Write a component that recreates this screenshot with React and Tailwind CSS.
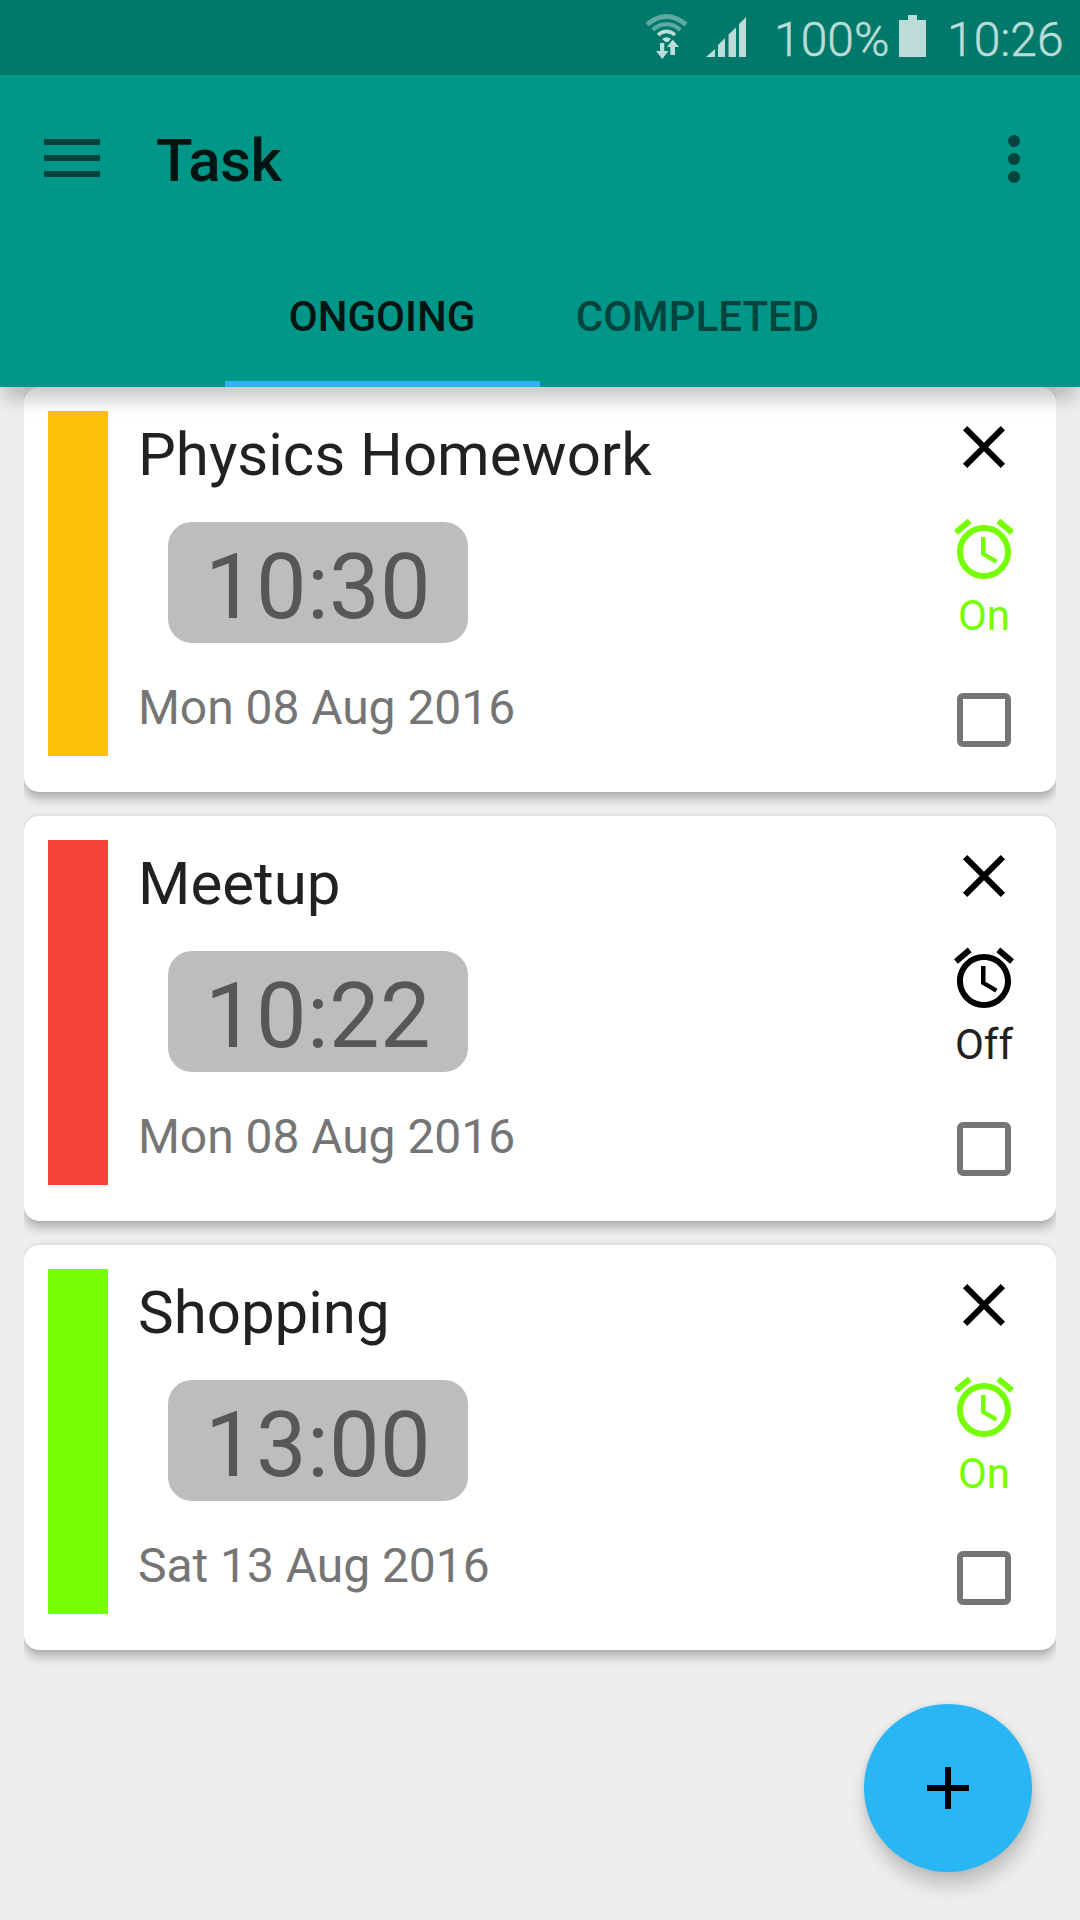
const TASKS = [
  { title: 'Physics Homework', time: '10:30', date: 'Mon 08 Aug 2016', bar: 'bg-[#ffc107]', on: true },
  { title: 'Meetup', time: '10:22', date: 'Mon 08 Aug 2016', bar: 'bg-[#f44336]', on: false },
  { title: 'Shopping', time: '13:00', date: 'Sat 13 Aug 2016', bar: 'bg-[#76ff03]', on: true },
];

function WifiIcon() {
  return (
    <svg className="ml-[645px] h-[60px] w-[44px]" viewBox="645 0 44 60" fill="none">
      <g stroke="#bbdcd7">
        <path d="M647 24.6 Q666.5 8.4 686 24.6" strokeWidth="4.6" opacity="0.5" />
        <path d="M652.7 29.8 Q666.5 18.6 680.3 29.8" strokeWidth="4.2" opacity="0.5" />
        <path d="M658 35 Q666.5 27.8 675 35" strokeWidth="3.6" />
      </g>
      <path d="M662 39 Q666.500 35.500 671 39 L668 42 H665.500 Z" fill="#bbdcd7" />
      <path
        d="M660 43 H664.300 V51 H668.500 L662.300 59 L656 51 H660 Z M670.300 55 V47 H666.800 L672.700 39.700 L679 47 H675 V55 Z"
        fill="#bbdcd7"
      />
    </svg>
  );
}

function StatusBar() {
  return (
    <div className="flex h-[75px] items-start bg-[#00796b] text-[48px] leading-[56px] font-light text-[#bbdcd7] [-webkit-text-stroke:0.5px_#bbdcd7]">
      <WifiIcon />
      <svg className="ml-[17px] h-[60px] w-[40px] shrink-0" viewBox="706 0 40 60" fill="#bbdcd7">
        <path d="M706 57 L715 49 V57 Z M718 57 V45 L725 38 V57 Z M728.500 57 V34.500 L736 27.500 V57 Z M739 57 V24 L746 17 V57 Z" />
      </svg>
      <span className="mt-[12px] ml-[28px] w-[125px] shrink-0">100%</span>
      <svg className="h-[60px] w-[27px] shrink-0" viewBox="899 0 27 60" fill="#bbdcd7">
        <path d="M899 20 H908 V15 H917 V20 H926 V57 H899 Z" />
      </svg>
      <span className="mt-[12px] ml-[21px]">10:26</span>
    </div>
  );
}

function AppBar() {
  return (
    <header className="relative z-10 h-[387px] bg-[#009688] shadow-[0_16px_18px_-4px_rgba(0,0,0,0.22)]">
      <StatusBar />
      <div className="flex h-[168px] items-center pr-[60px] pl-[44px]">
        <button className="-mt-[2px] flex w-[56px] flex-col gap-[10px]" aria-label="Menu">
          <span className="h-[6px] bg-[#00443d]" />
          <span className="h-[6px] bg-[#00443d]" />
          <span className="h-[6px] bg-[#00443d]" />
        </button>
        <h1 className="mt-[4px] ml-[56px] flex-1 text-[60px] leading-[70px] font-medium tracking-[-0.5px] text-[#001411]">Task</h1>
        <button className="flex w-[12px] flex-col gap-[6px]" aria-label="More">
          <span className="size-[12px] rounded-full bg-[#00443d]" />
          <span className="size-[12px] rounded-full bg-[#00443d]" />
          <span className="size-[12px] rounded-full bg-[#00443d]" />
        </button>
      </div>
      <nav className="flex h-[144px] justify-center text-[42px] leading-[147px] font-medium">
        <div className="w-[315px] border-b-[6px] border-[#29b6f6] pr-px text-center text-[#001411]">ONGOING</div>
        <div className="w-[315px] text-center text-[#00443d]">COMPLETED</div>
      </nav>
    </header>
  );
}

function TaskCard({ task }) {
  return (
    <div className="[clip-path:inset(-20px_0)]">
      <article className="flex h-[405px] rounded-[15px] bg-white p-[24px] shadow-[0_9px_10px_-1px_rgba(0,0,0,0.22),0_0_5px_rgba(0,0,0,0.14)]">
        <div className={`h-[345px] w-[60px] ${task.bar}`} />
        <div className="ml-[30px] flex flex-1 flex-col items-start">
          <h2 className="mt-[9px] h-[102px] text-[60px] leading-[70px] text-[#212121]">{task.title}</h2>
          <div className="ml-[30px] h-[121px] w-[300px] rounded-[24px] bg-[#bdbdbd] text-center text-[90px] leading-[132px] tracking-[0.4px] text-[#575757]">
            {task.time}
          </div>
          <p className="mt-[36px] text-[48px] leading-[58px] tracking-[-0.05px] text-[#757575]">{task.date}</p>
        </div>
        <div className="mr-[12px] flex w-[72px] flex-col items-center">
          <svg className="size-[72px] shrink-0" viewBox="0 0 24 24">
            <path d="M19 6.410L17.590 5 12 10.590 6.410 5 5 6.410 10.590 12 5 17.590 6.410 19 12 13.410 17.590 19 19 17.590 13.410 12z" />
          </svg>
          <svg className={`mt-[30px] size-[72px] shrink-0 ${task.on ? 'fill-[#76ff03]' : 'fill-black'}`} viewBox="0 0 24 24">
            <path d="M22 5.720l-4.600-3.860-1.290 1.530 4.600 3.860L22 5.720zM7.880 3.390L6.600 1.860 2 5.710l1.290 1.530 4.590-3.850zM12.500 8H11v6l4.750 2.850.750-1.230-4-2.370V8zM12 4c-4.970 0-9 4.030-9 9s4.020 9 9 9c4.970 0 9-4.030 9-9s-4.030-9-9-9zm0 16c-3.870 0-7-3.130-7-7s3.130-7 7-7 7 3.130 7 7-3.130 7-7 7z" />
          </svg>
          <span className={`mt-[6px] text-[42px] leading-[49px] ${task.on ? 'text-[#76ff03]' : 'text-[#212121]'}`}>
            {task.on ? 'On' : 'Off'}
          </span>
          <span className="mt-[53px] size-[54px] shrink-0 rounded-[6px] border-[6px] border-[#757575]" />
        </div>
      </article>
    </div>
  );
}

export default function App() {
  return (
    <div className="relative h-[1920px] w-[1080px] overflow-hidden bg-[#eeeeee] font-[Roboto,sans-serif]">
      <AppBar />
      <main className="flex flex-col gap-[24px] px-[24px]">
        {TASKS.map((task) => (
          <TaskCard key={task.title} task={task} />
        ))}
      </main>
      <button
        className="absolute right-[48px] bottom-[48px] flex size-[168px] items-center justify-center rounded-full bg-[#29b6f6] shadow-[2px_14px_18px_rgba(0,0,0,0.19),0_0_7px_rgba(0,0,0,0.09)]"
        aria-label="Add task"
      >
        <svg className="size-[72px]" viewBox="0 0 24 24">
          <path d="M19 13h-6v6h-2v-6H5v-2h6V5h2v6h6v2z" />
        </svg>
      </button>
    </div>
  );
}
